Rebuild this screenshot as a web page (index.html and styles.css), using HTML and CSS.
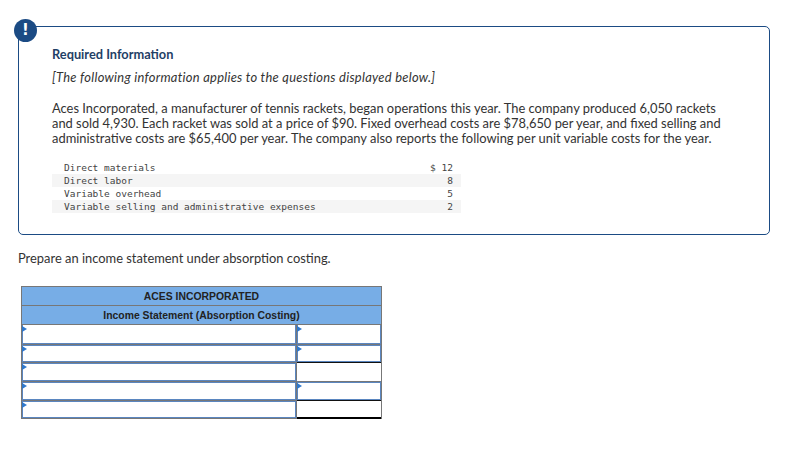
FILE: index.html
```html
<!DOCTYPE html>
<html lang="en">
<head>
<meta charset="utf-8">
<title>Required Information</title>
<link rel="stylesheet" href="styles.css">
</head>
<body>
<section class="notice">
  <div class="badge">!</div>
  <h2 class="notice-title">Required Information</h2>
  <p class="intro">[The following information applies to the questions displayed below.]</p>
  <p class="body">Aces Incorporated, a manufacturer of tennis rackets, began operations this year. The company produced 6,050 rackets and sold 4,930. Each racket was sold at a price of $90. Fixed overhead costs are $78,650 per year, and fixed selling and administrative costs are $65,400 per year. The company also reports the following per unit variable costs for the year.</p>
  <div class="costs">
    <div class="cost-row"><span>Direct materials</span><span>$ 12</span></div>
    <div class="cost-row shade"><span>Direct labor</span><span>8</span></div>
    <div class="cost-row"><span>Variable overhead</span><span>5</span></div>
    <div class="cost-row shade"><span>Variable selling and administrative expenses</span><span>2</span></div>
  </div>
</section>
<p class="prompt">Prepare an income statement under absorption costing.</p>
<div class="sheet">
  <div class="head">ACES INCORPORATED</div>
  <div class="head">Income Statement (Absorption Costing)</div>
  <div class="line first"><div class="cell label input"></div><div class="cell amount input"></div></div>
  <div class="line short"><div class="cell label input"></div><div class="cell amount input"></div></div>
  <div class="line"><div class="cell label input"></div><div class="cell amount plain"></div></div>
  <div class="line"><div class="cell label input"></div><div class="cell amount input"></div></div>
  <div class="line short"><div class="cell label input"></div><div class="cell amount plain last"></div></div>
</div>
</body>
</html>
```
FILE: styles.css
```css
* { box-sizing: border-box; }
html, body { margin: 0; padding: 0; background: #fff; }
body {
  width: 791px;
  height: 453px;
  overflow: hidden;
  padding: 26px 0 0 18px;
  font-family: "Lato", "Liberation Sans", sans-serif;
  color: #333;
}
.notice {
  position: relative;
  width: 752px;
  height: 209px;
  border: 1px solid #1b4b84;
  border-radius: 5px;
  padding: 19px 34px 0 33px;
}
.badge {
  position: absolute;
  left: -5px;
  top: -8px;
  width: 23px;
  height: 23px;
  border-radius: 50%;
  background: #1b4b84;
  color: #fff;
  font: bold 15px/23px "DejaVu Sans", sans-serif;
  text-align: center;
}
.notice-title {
  margin: 0;
  font-size: 12.8px;
  line-height: 16px;
  font-weight: 700;
  color: #1f3f66;
}
.intro {
  margin: 7px 0 0;
  font-size: 12.9px;
  line-height: 16px;
  font-style: italic;
  letter-spacing: 0.28px;
}
.body {
  margin: 16px 0 0;
  font-size: 12.9px;
  line-height: 15px;
  width: 675px;
}
.costs {
  margin-top: 15px;
  width: 409px;
  font: 9.5px/13px "DejaVu Sans Mono", monospace;
  color: #444;
}
.cost-row {
  display: flex;
  justify-content: space-between;
  height: 13px;
  padding: 0 8px 0 12px;
}
.shade { background: #f5f5f5; }
.prompt {
  margin: 15px 0 0;
  font-size: 12.9px;
  line-height: 16px;
}
.sheet {
  margin: 20px 0 0 3px;
  width: 361px;
  border: 1px solid #777;
}
.head {
  height: 19px;
  background: #77ade6;
  border-bottom: 1px solid #777;
  font: bold 10.4px/19px "Liberation Sans", sans-serif;
  color: #222;
  text-align: center;
}
.line {
  display: flex;
  height: 19px;
}
.short { height: 18px; }
.cell {
  position: relative;
  height: 100%;
}
.label { width: 275px; }
.amount { width: 84px; }
.input {
  border: 1px solid #5a86c0;
  border-top: 1px solid #777;
  box-shadow: inset 0 1px 0 #5a86c0;
}
.first .input { border-top: 0; box-shadow: none; }
.input::before {
  content: "";
  position: absolute;
  left: -1px;
  top: 1px;
  border-left: 5px solid #2f78cc;
  border-top: 3px solid transparent;
  border-bottom: 3px solid transparent;
}
.label.input { border-right-color: #777; box-shadow: inset 0 1px 0 #5a86c0, inset -1px 0 0 #5a86c0; }
.first .label.input { box-shadow: inset -1px 0 0 #5a86c0; }
.plain { border-top: 1px solid #111; }
.plain.last {
  height: calc(100% + 1px);
  margin-bottom: -1px;
  border-bottom: 2px solid #000;
}
```
